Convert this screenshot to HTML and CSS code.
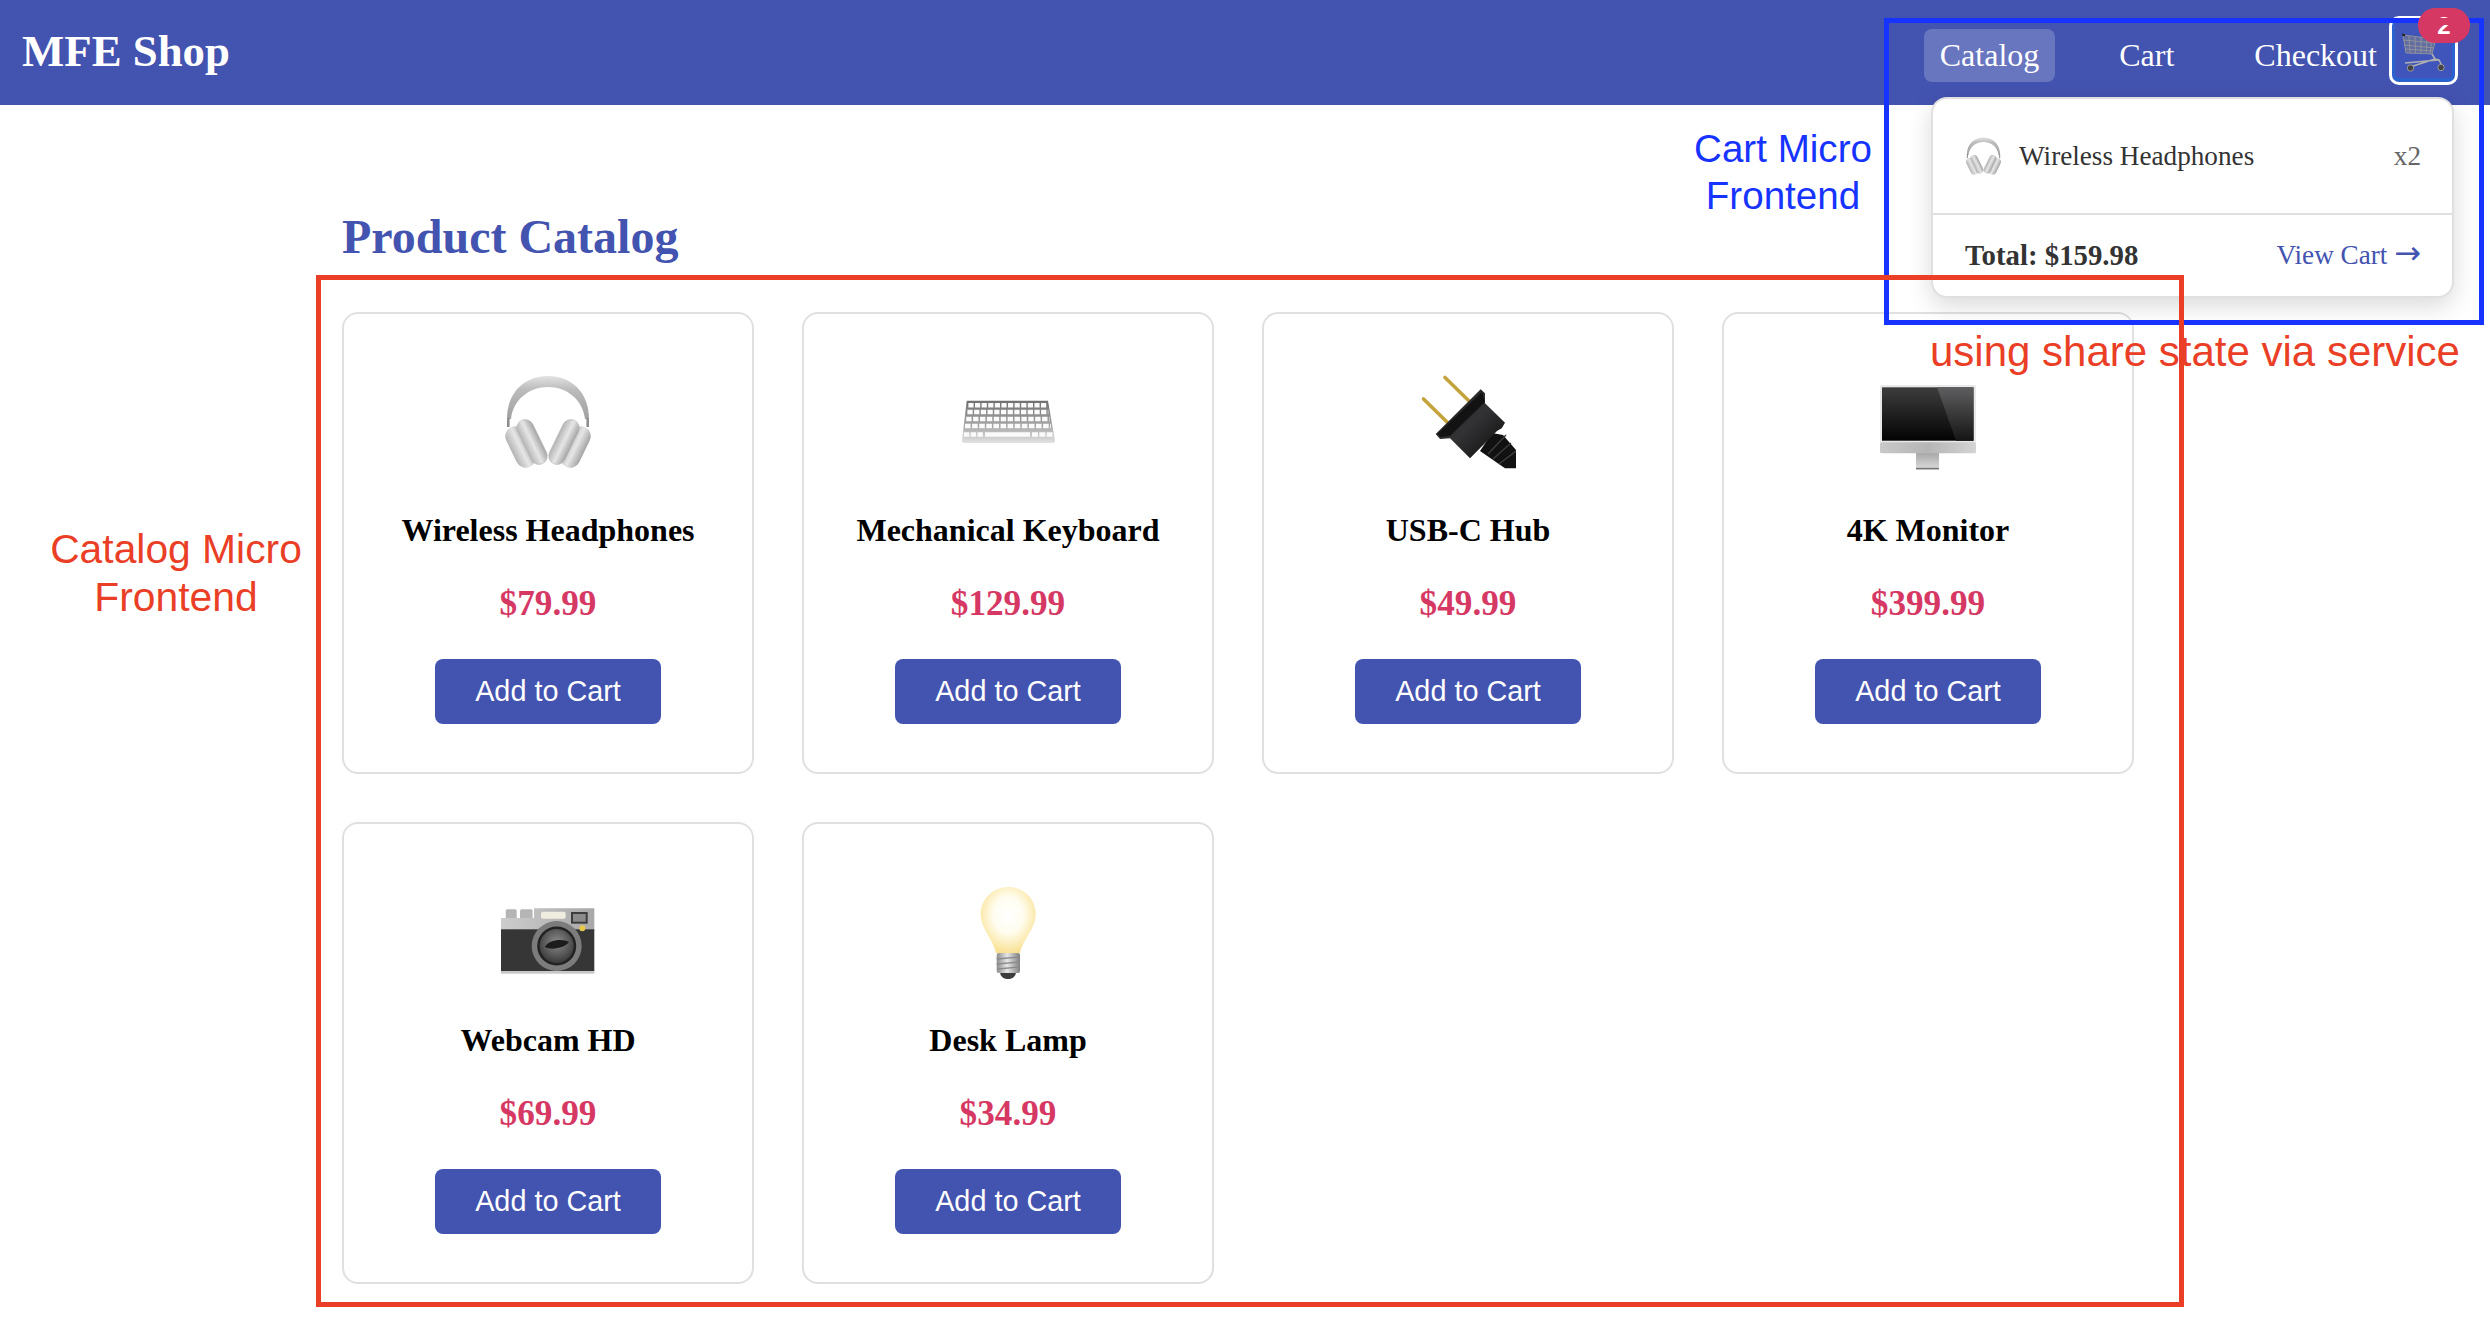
FILE: index.html
```html
<!DOCTYPE html>
<html lang="en">
<head>
<meta charset="utf-8">
<title>MFE Shop</title>
<link rel="stylesheet" href="styles.css">
</head>
<body>
<svg class="sprite" aria-hidden="true">
  <defs>
    <linearGradient id="hpBand" x1="0" y1="0" x2="0" y2="1"><stop offset="0" stop-color="#e2e2e2"/><stop offset=".3" stop-color="#bdbdbd"/><stop offset="1" stop-color="#a0a0a0"/></linearGradient>
    <linearGradient id="hpCup" x1="0" y1="0" x2="1" y2="0"><stop offset="0" stop-color="#b4b4b4"/><stop offset=".5" stop-color="#e6e6e6"/><stop offset="1" stop-color="#a4a4a4"/></linearGradient>
    <symbol id="headphones" viewBox="0 0 96 96">
      <path d="M7 44C7 16 26 1 48 1s41 15 41 43h-4C83 25 67 12 48 12S13 25 11 44Z" fill="url(#hpBand)"/>
      <rect x="7" y="43" width="2.600" height="9" fill="#8e8e8e"/>
      <rect x="86.400" y="43" width="2.600" height="9" fill="#8e8e8e"/>
      <g transform="rotate(-26 20.500 72)"><rect x="10.500" y="50" width="20" height="44" rx="10" fill="url(#hpCup)"/></g>
      <g transform="rotate(-26 32 67)"><rect x="23.500" y="43" width="17" height="48" rx="8.500" fill="url(#hpCup)" stroke="#b8b8b8" stroke-width=".6"/></g>
      <g transform="rotate(26 75.500 72)"><rect x="65.500" y="50" width="20" height="44" rx="10" fill="url(#hpCup)"/></g>
      <g transform="rotate(26 64 67)"><rect x="55.500" y="43" width="17" height="48" rx="8.500" fill="url(#hpCup)" stroke="#b8b8b8" stroke-width=".6"/></g>
    </symbol>
  </defs>
</svg>

<header class="topbar">
  <a class="brand">MFE Shop</a>
  <nav class="nav">
    <a class="nav-link nav-link-active">Catalog</a>
    <a class="nav-link">Cart</a>
    <a class="nav-link">Checkout</a>
    <button class="cart-button" type="button">
      <svg class="cart-icon" viewBox="0 0 43 39">
        <g fill="none" stroke="#999" stroke-width=".8">
          <path d="M1 2 34 6 30 21 4 20Z" fill="#85858a" fill-opacity=".5"/>
          <path d="M1 7 33 10M2 12 32 15M3 16 31 18M7 3 8 20M13 4 13.500 20M19 4 19 20M25 5 24 20M30 5 28 21"/>
        </g>
        <path d="M0 1.500 3 2.500" stroke="#222" stroke-width="2"/>
        <path d="M3 30 36 27M30 21 33 26 37 27 40 33M33 26 8 34" fill="none" stroke="#b0b0b0" stroke-width="1.500"/>
        <circle cx="8.500" cy="35" r="3.200" fill="#444" stroke="#aaa" stroke-width=".8"/>
        <circle cx="39" cy="34.500" r="3.200" fill="#444" stroke="#aaa" stroke-width=".8"/>
      </svg>
      <span class="cart-badge"><span class="cart-count">2</span></span>
    </button>
  </nav>

  <section class="dropdown">
    <div class="dropdown-item">
      <svg class="item-icon"><use href="#headphones"/></svg>
      <span class="item-name">Wireless Headphones</span>
      <span class="item-qty">x2</span>
    </div>
    <div class="dropdown-footer">
      <strong class="total">Total: $159.98</strong>
      <a class="view-cart">View Cart <span class="arrow">→</span></a>
    </div>
  </section>
</header>

<main class="catalog">
  <h1 class="catalog-title">Product Catalog</h1>
  <div class="grid">
    <article class="card">
      <svg class="emoji"><use href="#headphones"/></svg>
      <h3 class="name">Wireless Headphones</h3>
      <p class="price">$79.99</p>
      <button class="add" type="button">Add to Cart</button>
    </article>

    <article class="card">
      <svg class="emoji" viewBox="0 0 96 96">
        <defs><linearGradient id="kbBody" x1="0" y1="0" x2="0" y2="1"><stop offset="0" stop-color="#6f6f6f"/><stop offset=".6" stop-color="#a8a8a8"/><stop offset="1" stop-color="#e2e2e2"/></linearGradient></defs>
        <path d="M6.700 25.700H88L95 66Q95 68 93 68H4Q2 68 2 66Z" fill="url(#kbBody)"/>
        <g fill="none" stroke="#fafafa" stroke-width="4.600">
          <line x1="8.400" y1="30.200" x2="87" y2="30.200" stroke-dasharray="5.200 1.400"/>
          <line x1="7.400" y1="37" x2="88.300" y2="37" stroke-dasharray="5.300 1.400"/>
          <line x1="6.200" y1="44" x2="89.500" y2="44" stroke-dasharray="5.400 1.500"/>
          <line x1="5" y1="51" x2="91" y2="51" stroke-dasharray="5.600 1.500"/>
          <line x1="3.800" y1="59.500" x2="23" y2="59.500" stroke-dasharray="5.500 1.300"/>
          <line x1="25" y1="59.500" x2="70" y2="59.500"/>
          <line x1="72" y1="59.500" x2="93" y2="59.500" stroke-dasharray="6 1.300"/>
        </g>
      </svg>
      <h3 class="name">Mechanical Keyboard</h3>
      <p class="price">$129.99</p>
      <button class="add" type="button">Add to Cart</button>
    </article>

    <article class="card">
      <svg class="emoji" viewBox="0 0 96 96">
        <defs><linearGradient id="plugBody" x1="0" y1="0" x2="1" y2="1"><stop offset="0" stop-color="#161616"/><stop offset=".5" stop-color="#333335"/><stop offset="1" stop-color="#0c0c0c"/></linearGradient></defs>
        <g stroke="#c4a33c" stroke-width="3.600" stroke-linecap="round"><line x1="25" y1="2.500" x2="49" y2="26"/><line x1="3.500" y1="24" x2="28" y2="48"/></g>
        <path d="M72 58 83 60 96 75V93.300H85L60 76Z" fill="#111"/>
        <path d="M68 79 86 60M73 84 91 68M79 89 96 76" stroke="#3d3d3d" stroke-width="1.400"/>
        <path d="M60.700 14.300 65 18.300 65 28.300 85 47.700 81.700 53.300 77 56 50 83.300 30 63.300 20 64 15.700 59Z" fill="url(#plugBody)"/>
        <path d="M62 17 17.500 59 21 62 30 61 65 27Z" fill="#121212"/>
      </svg>
      <h3 class="name">USB-C Hub</h3>
      <p class="price">$49.99</p>
      <button class="add" type="button">Add to Cart</button>
    </article>

    <article class="card">
      <svg class="emoji" viewBox="0 0 96 96">
        <defs>
          <linearGradient id="monScreen" x1="0" y1="0" x2="0" y2="1"><stop offset="0" stop-color="#3d3d3d"/><stop offset="1" stop-color="#030303"/></linearGradient>
          <linearGradient id="monGlare" x1="0" y1="0" x2="0" y2="1"><stop offset="0" stop-color="#5e5e60"/><stop offset="1" stop-color="#151515"/></linearGradient>
          <linearGradient id="monChin" x1="0" y1="0" x2="1" y2="0"><stop offset="0" stop-color="#c9c9c9"/><stop offset=".5" stop-color="#b5b5b5"/><stop offset="1" stop-color="#d4d4d4"/></linearGradient>
          <linearGradient id="monStand" x1="0" y1="0" x2="0" y2="1"><stop offset="0" stop-color="#a7a7a7"/><stop offset="1" stop-color="#dcdcdc"/></linearGradient>
        </defs>
        <rect x="0" y="10" width="96" height="58" rx="1.500" fill="#e9e9e9"/>
        <rect x="2" y="12.300" width="91.500" height="53.400" fill="url(#monScreen)"/>
        <path d="M57 12.300H93.500V65.700H76Z" fill="url(#monGlare)"/>
        <rect x="36" y="78" width="23" height="16.500" fill="url(#monStand)"/>
        <rect x="36" y="92.800" width="23" height="1.600" fill="#777"/>
        <rect x="0" y="67.300" width="96" height="11" rx="1.500" fill="url(#monChin)"/>
      </svg>
      <h3 class="name">4K Monitor</h3>
      <p class="price">$399.99</p>
      <button class="add" type="button">Add to Cart</button>
    </article>

    <article class="card">
      <svg class="emoji" viewBox="0 0 96 96">
        <defs>
          <radialGradient id="camGlass" cx=".5" cy=".4" r=".6"><stop offset="0" stop-color="#8d8d8d"/><stop offset="1" stop-color="#3a3a3a"/></radialGradient>
          <linearGradient id="camTop" x1="0" y1="0" x2="1" y2="0"><stop offset="0" stop-color="#cdcdcd"/><stop offset="1" stop-color="#a8a8a8"/></linearGradient>
        </defs>
        <rect x="5.700" y="24.300" width="11" height="10" rx="1.500" fill="#b5b5b5"/>
        <rect x="20" y="24.300" width="12.600" height="10" rx="1.500" fill="#b5b5b5"/>
        <path d="M1 33H34V23.300H94.300V46H1Z" fill="url(#camTop)"/>
        <rect x="1" y="44.300" width="93.300" height="42" fill="#363637"/>
        <rect x="1" y="86" width="93.300" height="2.700" fill="#c8c8c8"/>
        <rect x="41" y="26.700" width="24.700" height="7" rx="2" fill="#efece0"/>
        <rect x="71" y="27" width="16.700" height="11.700" fill="#3d3d3d"/>
        <rect x="73" y="29" width="12.700" height="7.700" fill="#8b8b8b"/>
        <circle cx="56.700" cy="61" r="25" fill="#7c7c7c"/>
        <circle cx="56.700" cy="61" r="19.500" fill="#222"/>
        <circle cx="56.700" cy="61" r="17" fill="url(#camGlass)"/>
        <path d="M45 62C48 55 62 53 69 57 66 62 52 66 45 62Z" fill="#1c1c1c"/>
        <circle cx="82.300" cy="43.300" r="3" fill="#e8c84a"/>
      </svg>
      <h3 class="name">Webcam HD</h3>
      <p class="price">$69.99</p>
      <button class="add" type="button">Add to Cart</button>
    </article>

    <article class="card">
      <svg class="emoji" viewBox="0 0 96 96">
        <defs>
          <radialGradient id="bulbGlow" cx=".5" cy=".42" r=".6"><stop offset="0" stop-color="#fff"/><stop offset=".45" stop-color="#fffdf0"/><stop offset="1" stop-color="#f9e08f"/></radialGradient>
          <linearGradient id="bulbBase" x1="0" y1="0" x2="1" y2="0"><stop offset="0" stop-color="#8c8c8c"/><stop offset=".45" stop-color="#e6e6e6"/><stop offset="1" stop-color="#7f7f7f"/></linearGradient>
        </defs>
        <path d="M48.300 2C64 2 75.700 14 75.700 29.300 75.700 44 63 54 60 68H36C33 54 20.700 44 20.700 29.300 20.700 14 33 2 48.300 2Z" fill="url(#bulbGlow)"/>
        <path d="M48 94A7 7 0 0 1 40 87H56A7 7 0 0 1 48 94Z" fill="#3c3c3c"/>
        <rect x="36.700" y="68" width="23.300" height="20" rx="2" fill="url(#bulbBase)"/>
        <path d="M36.700 74 60 72M36.700 79 60 77M37.700 84 59 82" stroke="#8a8a8a" stroke-width="1.300"/>
      </svg>
      <h3 class="name">Desk Lamp</h3>
      <p class="price">$34.99</p>
      <button class="add" type="button">Add to Cart</button>
    </article>
  </div>
</main>

<div class="note-box note-box-blue"></div>
<div class="note-box note-box-red"></div>
<p class="note note-cart">Cart Micro<br>Frontend</p>
<p class="note note-catalog">Catalog Micro<br>Frontend</p>
<p class="note note-state">using share state via service</p>
</body>
</html>
```

FILE: styles.css
```css
* { box-sizing: border-box; }

html, body {
  margin: 0;
  background: #fff;
}

body {
  width: 2490px;
  height: 1324px;
  overflow: hidden;
  position: relative;
  font-family: "Liberation Serif", "Times New Roman", serif;
  color: #000;
}

.sprite {
  position: absolute;
  width: 0;
  height: 0;
}

/* Top bar */
.topbar {
  position: relative;
  height: 105px;
  background: #4353b0;
  display: flex;
  justify-content: space-between;
  align-items: flex-start;
  padding: 0 32px 0 22px;
  color: #fff;
}

.brand {
  margin-top: 25px;
  font-size: 44.8px;
  font-weight: 700;
}

.nav {
  display: flex;
  align-items: center;
  gap: 48px;
  margin-top: 16px;
}

.nav-link {
  padding: 8px 16px;
  margin-top: 10px;
  font-size: 32px;
  border-radius: 8px;
}

.nav-link-active {
  background: rgba(255, 255, 255, 0.2);
}

.cart-button {
  position: relative;
  width: 69px;
  height: 69px;
  margin-left: -52px;
  padding: 0;
  display: flex;
  align-items: center;
  justify-content: center;
  background: #3f55bb;
  border: 3px solid #fff;
  border-radius: 10px;
  box-shadow: inset 0 -4px 0 #2a62cf, inset 3px 0 0 #2a62cf, inset -3px 0 0 #2a62cf;
}

.cart-icon {
  width: 43px;
  height: 39px;
  margin-left: -1px;
  margin-top: 3px;
}

.cart-badge {
  position: absolute;
  z-index: 3;
  top: -11px;
  left: 26px;
  width: 52px;
  height: 35px;
  border-radius: 18px;
  background: #d63864;
  color: #fff;
  display: flex;
  align-items: center;
  justify-content: center;
  font-family: "Liberation Sans", Arial, sans-serif;
  font-size: 24px;
  font-weight: 700;
  overflow: hidden;
}

.cart-badge::after {
  content: "";
  position: absolute;
  left: 0;
  right: 0;
  top: 10px;
  height: 7px;
  background: #d63864;
}

/* Cart dropdown */
.dropdown {
  position: absolute;
  z-index: 1;
  top: 97px;
  right: 36px;
  width: 523px;
  height: 201px;
  display: flex;
  flex-direction: column;
  background: #fff;
  color: #333;
  border: 2px solid #e0e0e0;
  border-radius: 16px;
  box-shadow: 0 8px 24px rgba(0, 0, 0, 0.15);
}

.dropdown-item {
  flex: 0 0 116px;
  display: flex;
  align-items: center;
  gap: 16px;
  padding: 0 31px 0 31px;
  border-bottom: 2px solid #e0e0e0;
  font-size: 27.2px;
}

.item-icon {
  width: 39px;
  height: 39px;
}

.item-qty {
  margin-left: auto;
  color: #666;
}

.dropdown-footer {
  flex: 1;
  display: flex;
  align-items: center;
  justify-content: space-between;
  padding: 0 31px 0 32px;
}

.total {
  font-size: 28.8px;
}

.view-cart {
  margin-bottom: 3px;
  font-size: 27.2px;
  color: #4353b0;
}

.arrow {
  font-family: "DejaVu Sans", sans-serif;
  font-size: 32px;
  line-height: 1;
}

/* Catalog */
.catalog {
  width: 1792px;
  margin-left: 342px;
  padding-top: 104px;
}

.catalog-title {
  margin: 0 0 48px;
  font-size: 48px;
  font-weight: 700;
  color: #4353b0;
}

.grid {
  display: grid;
  grid-template-columns: repeat(4, 1fr);
  gap: 48px;
}

.card {
  height: 462px;
  display: flex;
  flex-direction: column;
  align-items: center;
  padding-top: 61px;
  background: #fff;
  border: 2px solid #e0e0e0;
  border-radius: 16px;
}

.emoji {
  width: 96px;
  height: 96px;
  flex: none;
  margin-bottom: 41px;
}

.name {
  margin: 0 0 35px;
  font-size: 32px;
  font-weight: 700;
}

.price {
  margin: 0 0 35px;
  font-size: 35.2px;
  font-weight: 700;
  color: #d63864;
}

.add {
  width: 226px;
  height: 65px;
  padding: 0;
  background: #4353b0;
  color: #fff;
  border: 0;
  border-radius: 8px;
  font-family: "Liberation Sans", Arial, sans-serif;
  font-size: 28.8px;
}

/* Annotations drawn on top of the screenshot */
.note-box {
  position: absolute;
  z-index: 2;
  border-style: solid;
  border-width: 5px;
  pointer-events: none;
}

.note-box-blue {
  left: 1884px;
  top: 18px;
  width: 600px;
  height: 307px;
  border-color: #1633ff;
}

.note-box-red {
  left: 316px;
  top: 275px;
  width: 1868px;
  height: 1032px;
  border-color: #ea3f26;
}

.note {
  position: absolute;
  z-index: 2;
  margin: 0;
  text-align: center;
  font-family: "Liberation Sans", Arial, sans-serif;
}

.note-cart {
  left: 1683px;
  top: 126px;
  width: 200px;
  font-size: 38.6px;
  line-height: 46.5px;
  color: #1633ff;
}

.note-catalog {
  left: 36px;
  top: 525px;
  width: 280px;
  font-size: 40.8px;
  line-height: 48px;
  color: #ea3f26;
}

.note-state {
  left: 1930px;
  top: 328px;
  font-size: 42px;
  line-height: 48px;
  white-space: nowrap;
  color: #ea3f26;
}
```
